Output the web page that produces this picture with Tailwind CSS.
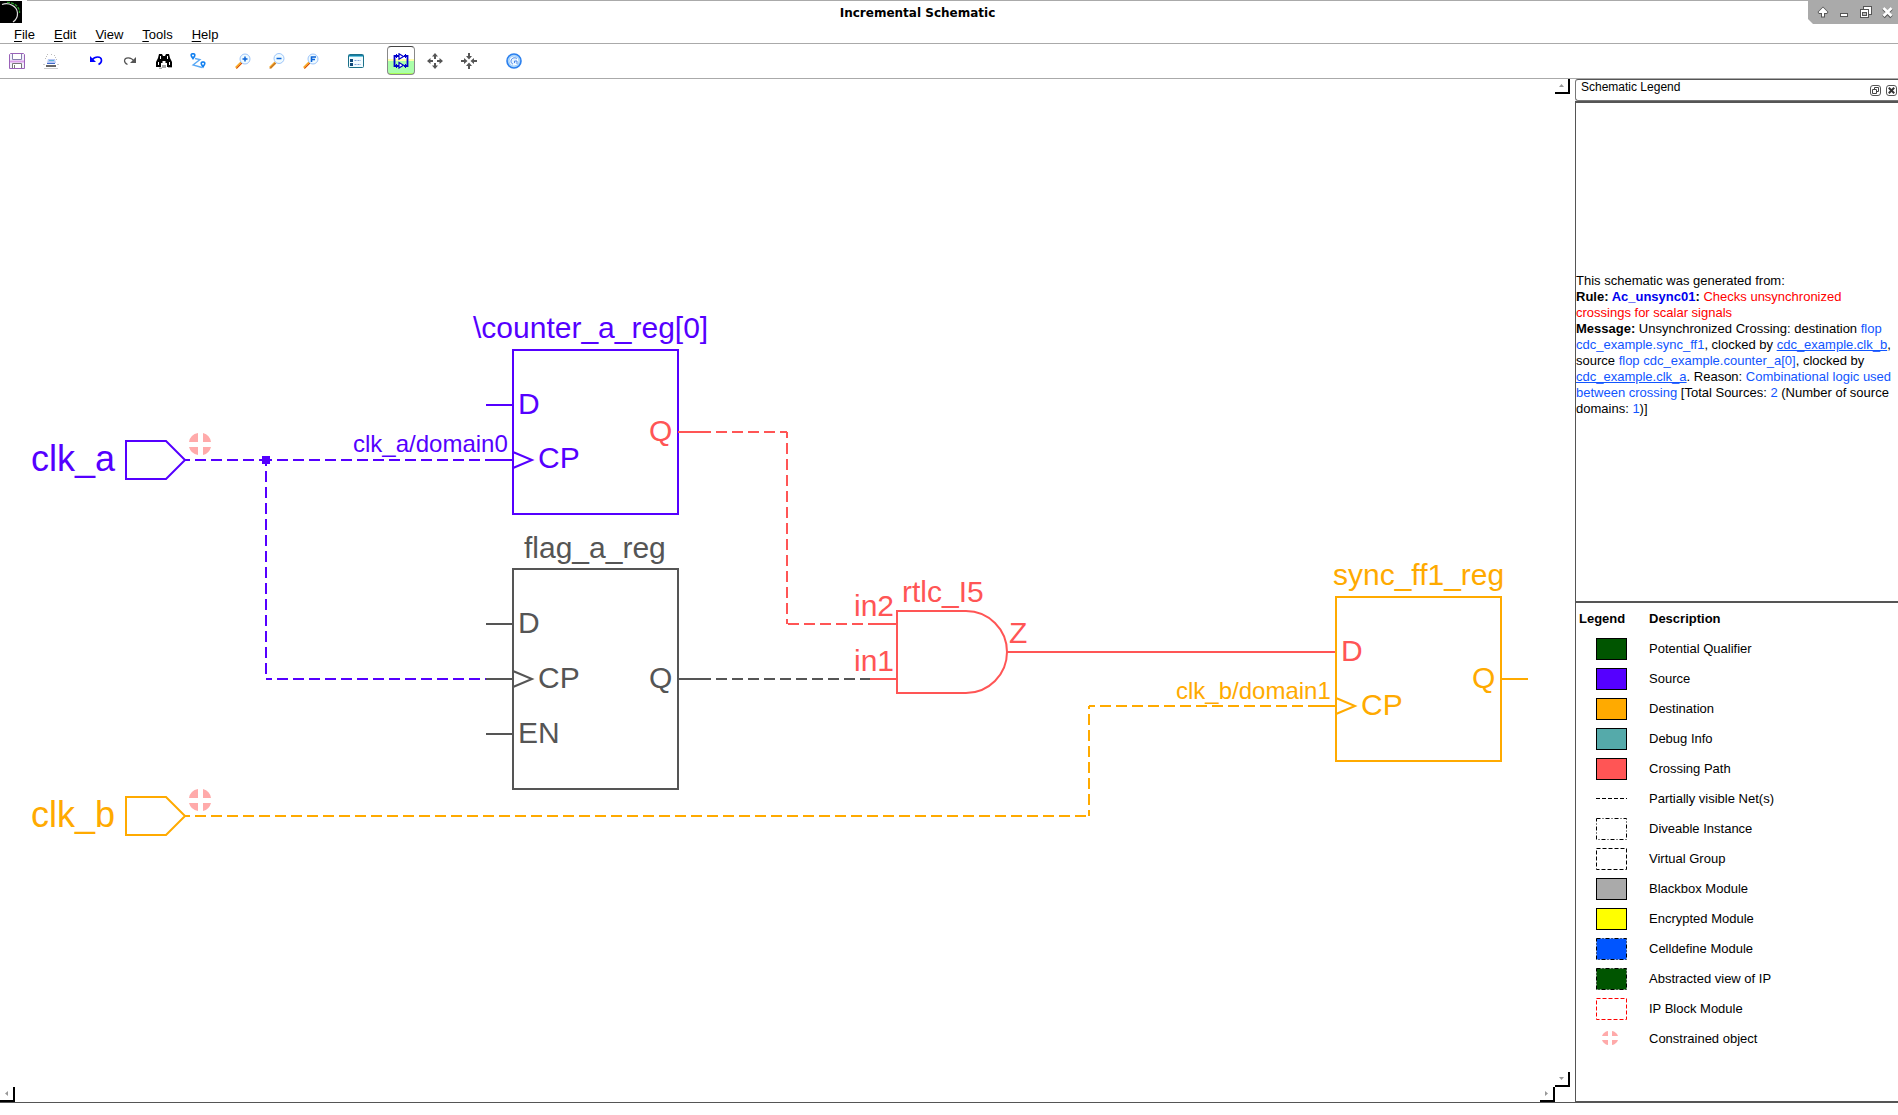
<!DOCTYPE html>
<html lang="en">
<head>
<meta charset="utf-8">
<meta name="viewport" content="width=device-width, initial-scale=1">
<title>Incremental Schematic</title>
<script src="https://cdn.jsdelivr.net/npm/@tailwindcss/browser@4"></script>
</head>
<body class="bg-white text-black font-['Liberation_Sans',Arial,sans-serif] text-[13px] leading-4">
<div class="min-h-screen flex flex-col pb-3">

  <!-- Title bar -->
  <header class="h-6 flex items-start">
    <svg class="w-[22px] h-[22px] mt-px shrink-0" viewBox="0 0 22 22" aria-hidden="true">
      <rect width="22" height="22" fill="#000"/>
      <path d="M2 3.500C9 1 17 5 17.500 12c.2 4-1.500 7-4.500 9" fill="none" stroke="#ddd" stroke-width="1.200"/>
      <path d="M7 1.500C14 1 20 6 19.500 12" fill="none" stroke="#2a9a2a" stroke-width="1.300" stroke-dasharray="3 1"/>
    </svg>
    <div class="flex-1 ml-[5px] h-6 border-t border-[#aaa] flex justify-center">
      <h1 class="font-['DejaVu_Sans',sans-serif] font-bold text-[12px] leading-6">Incremental Schematic</h1>
    </div>
    <div class="w-[90px] h-6 pl-1 bg-[#aaa] flex items-center justify-around [clip-path:polygon(0_0,100%_0,100%_100%,5px_100%,0_19px)]">
      <button type="button" aria-label="Keep above" class="size-4"><svg viewBox="0 0 16 16"><path d="M8 2.500l5.500 5.500-1.500 2h-2v3.500H6V10H4L2.500 8z" fill="#555"/><path d="M8 3.500l4.500 4.500-.8 1H9v3.500H7V9H4.300l-.8-1z" fill="#fff"/></svg></button>
      <button type="button" aria-label="Minimize" class="size-4"><svg viewBox="0 0 16 16" shape-rendering="crispEdges"><path d="M4.500 9.500h7v3h-7z" fill="#fff" stroke="#555"/></svg></button>
      <button type="button" aria-label="Restore" class="size-4"><svg viewBox="0 0 16 16" shape-rendering="crispEdges"><path d="M5.500 2.500h8v8h-8z" fill="#fff" stroke="#555"/><path d="M2.500 5.500h8v8h-8z" fill="#fff" stroke="#555"/><path d="M4.500 8.500h4v3h-4z" fill="#bbb" stroke="#555"/></svg></button>
      <button type="button" aria-label="Close" class="size-4"><svg viewBox="0 0 16 16"><path d="M4.500 4.500l8 8.500m0-8.500l-8 8.500" stroke="#555" stroke-width="3.500"/><path d="M4.500 4l8 8m0-8l-8 8" stroke="#fff" stroke-width="2.800"/></svg></button>
    </div>
  </header>

  <!-- Menu bar -->
  <nav class="h-5 border-b border-[#aaa] flex items-end gap-[19px] pl-[14px]">
    <button type="button"><span class="underline underline-offset-2">F</span>ile</button>
    <button type="button"><span class="underline underline-offset-2">E</span>dit</button>
    <button type="button"><span class="underline underline-offset-2">V</span>iew</button>
    <button type="button"><span class="underline underline-offset-2">T</span>ools</button>
    <button type="button"><span class="underline underline-offset-2">H</span>elp</button>
  </nav>

  <!-- Tool bar -->
  <div role="toolbar" aria-label="Main" class="h-[35px] border-b border-[#aaa] flex items-center gap-[11px]">
    <div class="flex">
      <button type="button" aria-label="Save" class="w-[34px] h-[30px] flex items-center justify-center">
        <svg class="size-4" viewBox="0 0 16 16"><path d="M1.500.5h13l1 1v14H.5v-14z" fill="#f3f0fb" stroke="#9a62b8"/><path d="M3.500 1v5.500h9V1" fill="#fff" stroke="#8580ad"/><path d="M1 8.500h14" stroke="#dca0ea" stroke-width="2"/><path d="M3.500 15v-4.500h9V15" fill="#fff" stroke="#777"/><path d="M5.500 12v3" stroke="#777"/></svg>
      </button>
      <button type="button" aria-label="Print" class="w-[34px] h-[30px] flex items-center justify-center">
        <svg class="size-4" viewBox="0 0 16 16"><path d="M4 1.500h1m3 0h1m2 1h1M3 3.500h1m8 1h1M2 5.500h1m10 1h1" stroke="#bbb"/><path d="M5 6h7l1 4H4z" fill="#b9c8f4"/><path d="M6 7.500h5" stroke="#58b6d6"/><path d="M4 10.500h8" stroke="#4169c8"/><path d="M0 11.500h2m12 0h2M1 15.500h14" stroke="#ccc"/><path d="M3 13h10" stroke="#333" stroke-width="1.500"/></svg>
      </button>
    </div>
    <div class="flex">
      <button type="button" aria-label="Undo" class="w-[34px] h-[30px] flex items-center justify-center">
        <svg class="size-4" viewBox="0 0 16 16"><path d="M2 3v6h6z" fill="#00f"/><path d="M4 7c3-4 9-4 9.500 0 .2 2-1 3.500-3 4.500" fill="none" stroke="#00f" stroke-width="1.600"/></svg>
      </button>
      <button type="button" aria-label="Redo" class="w-[34px] h-[30px] flex items-center justify-center">
        <svg class="size-4" viewBox="0 0 16 16"><path d="M14 4v6H8z" fill="#555"/><path d="M12 8C9 4 3 4 2.500 7.500c-.2 2 1 3 3 4" fill="none" stroke="#555" stroke-width="1.200"/></svg>
      </button>
      <button type="button" aria-label="Find" class="w-[34px] h-[30px] flex items-center justify-center">
        <svg class="size-4" viewBox="0 0 16 16"><path d="M6 12h4v3H6zM12 14h4v1h-4zM3 14.500h3V16H3z" fill="#aaa"/><path d="M3 1h3l1 2h2l1-2h3l1 4 2 4v5h-5v-4H9.500V8h-3v2H5v4H0V9l2-4z" fill="#000"/><path d="M4.500 3v3M2.500 9v3m9-9v3m2 3v3" stroke="#fff"/></svg>
      </button>
      <button type="button" aria-label="Trace path" class="w-[34px] h-[30px] flex items-center justify-center">
        <svg class="size-4" viewBox="0 0 16 16"><path d="M5 5.500l5 1L3 12l9 2.500" fill="none" stroke="#5aa9f5" stroke-width="1.300"/><path d="M3 7L.8 3.800C-.3 1 1 0 3 0s3.300 1 2.200 3.800zM13 15.500l-2.200-3.700c-1-2.500.2-3.600 2.200-3.600s3.200 1.100 2.200 3.600z" fill="#1280f0"/><circle cx="3" cy="2.500" r="1" fill="#fff"/><circle cx="13" cy="10.800" r="1" fill="#fff"/></svg>
      </button>
    </div>
    <div class="flex">
      <button type="button" aria-label="Zoom in" class="w-[34px] h-[30px] flex items-center justify-center">
        <svg class="size-4" viewBox="0 0 16 16"><path d="M1 15l5.500-5.500" stroke="#f5a623" stroke-width="2.600"/><path d="M1.500 15.500L7 10" stroke="#d8401c"/><circle cx="10" cy="6" r="5" fill="#f0fbff" stroke="#9cc4fa"/><path d="M7.500 6h5M10 3.500v5" stroke="#0a63d8" stroke-width="1.500"/></svg>
      </button>
      <button type="button" aria-label="Zoom out" class="w-[34px] h-[30px] flex items-center justify-center">
        <svg class="size-4" viewBox="0 0 16 16"><path d="M1 15l5.500-5.500" stroke="#f5a623" stroke-width="2.600"/><path d="M1 15.500L6.500 10" stroke="#a0522d"/><circle cx="10" cy="5.500" r="5" fill="#f0fbff" stroke="#9cc4fa"/><path d="M7.500 5.500h5" stroke="#0a63d8" stroke-width="1.500"/></svg>
      </button>
      <button type="button" aria-label="Zoom to fit" class="w-[34px] h-[30px] flex items-center justify-center">
        <svg class="size-4" viewBox="0 0 16 16"><path d="M1 15l5.500-5.500" stroke="#f5a623" stroke-width="2.600"/><path d="M1.500 15.500L7 10" stroke="#d8401c"/><circle cx="10" cy="6" r="5" fill="#f0fbff" stroke="#9cc4fa"/><path d="M8.500 9V4H13M8.500 6.500h3.500" fill="none" stroke="#0a63d8" stroke-width="1.600"/></svg>
      </button>
    </div>
    <button type="button" aria-label="Properties" class="w-[34px] h-[30px] flex items-center justify-center">
      <svg class="size-4" viewBox="0 0 16 16"><rect x=".5" y="1.500" width="15" height="13" rx="1" fill="#f2fbff" stroke="#1b7089"/><path d="M1 2.500h14" stroke="#1280a8"/><path d="M1 3.500h14" stroke="#6cc4dc"/><path d="M2 6h3v3H2zM2 10h3v3H2z" fill="#104878"/><path d="M6.500 7.500H13M6.500 11.500H13" stroke="#7fa0d8" stroke-dasharray="2 1"/></svg>
    </button>
    <div class="flex">
      <button type="button" aria-label="Schematic mode" aria-pressed="true" class="w-7 mx-[3px] h-[29px] flex items-center justify-center rounded-[4px] border border-[#888] border-t-[#444] bg-[linear-gradient(#fff_46%,#ffa_46%,#ffa_50%,#afa_50%,#afa_96%,#af5_96%)]">
        <svg class="size-4" viewBox="0 0 16 16"><path d="M6 3H1.500v10H6m5-10h3.500v10H11" fill="none" stroke="#00c" stroke-width="1.800"/><path d="M6 .8l4.500 2.700L6 6.200zM6 9.500l4.500 2.700L6 15z" fill="#fff" stroke="#00c" stroke-width="1.200"/><path d="M3.500 1v4m0 6v4m9-14v4m0 6v4" stroke="#00c"/></svg>
      </button>
      <button type="button" aria-label="Expand" class="w-[34px] h-[30px] flex items-center justify-center">
        <svg class="size-4" viewBox="0 0 16 16" fill="#555"><path d="M8 0l3 3.500H9V6H7V3.500H5zM8 16l3-3.500H9V10H7v2.500H5zM0 8l3.500-3v2H6v2H3.500v2zM16 8l-3.500-3v2H10v2h2.500v2z"/></svg>
      </button>
      <button type="button" aria-label="Collapse" class="w-[34px] h-[30px] flex items-center justify-center">
        <svg class="size-4" viewBox="0 0 16 16" fill="#555"><path d="M8 6.500L5 3h2V0h2v3h2zM8 9.500L5 13h2v3h2v-3h2zM6.500 8L3 5v2H0v2h3v2zM9.500 8L13 5v2h3v2h-3v2z"/></svg>
      </button>
    </div>
    <button type="button" aria-label="Refresh" class="w-[34px] h-[30px] flex items-center justify-center">
      <svg class="size-4" viewBox="0 0 16 16"><circle cx="8" cy="8" r="7" fill="#a9d4fb" stroke="#2a7fee" stroke-width="1.600"/><circle cx="8" cy="8" r="4" fill="#e4f3ff" stroke="#fff"/><path d="M11 5.500C9 4 5 4.800 5 8.300c0 1.500.8 2.500 2 2.700M11 11V8H8.500v2" fill="none" stroke="#4a86e8"/></svg>
    </button>
  </div>

  <main class="flex-1 flex">
    <!-- Schematic canvas with its scroll bars -->
    <section aria-label="Schematic" class="flex-1 min-w-0 flex flex-col border-b border-[#555] pr-[5px]">
      <div class="flex-1 flex">
        <svg class="flex-1 min-w-0 block" viewBox="0 79 1555 1008" preserveAspectRatio="xMinYMin meet" font-size="30" fill="none" stroke-width="2" font-family="Liberation Sans, Arial, sans-serif">
          <defs>
            <g id="constraint" fill="#faa" stroke="none">
              <path d="M-2-2h-9A11 11 0 0 1-2-11zM3-2h8A11 11 0 0 0 3-11zM-2 3h-9A11 11 0 0 0-2 11zM3 3h8A11 11 0 0 1 3 11z"/>
            </g>
          </defs>

          <!-- clk_a net and source register -->
          <g stroke="#50f">
            <path d="M126 441h40l19 19-19 19h-40z"/>
            <path d="M185 460h81" stroke-dasharray="11 5" stroke-dashoffset="6"/>
            <path d="M266 460h219" stroke-dasharray="11 5" stroke-dashoffset="5"/>
            <path d="M266 460v219" stroke-dasharray="11 5" stroke-dashoffset="5"/>
            <path d="M266 679h220" stroke-dasharray="11 5" stroke-dashoffset="5"/>
            <path d="M513 350h165v164h-165zM486 405h27M485 460h28M513 452l19 8-19 8"/>
          </g>
          <rect x="262" y="456" width="8" height="8" fill="#50f"/>
          <g fill="#50f">
            <text x="31" y="471" font-size="36">clk_a</text>
            <text x="353" y="452" font-size="24">clk_a/domain0</text>
            <text x="473" y="338">\counter_a_reg[0]</text>
            <text x="518" y="414">D</text>
            <text x="538" y="468">CP</text>
          </g>

          <!-- flag_a_reg -->
          <g stroke="#555">
            <path d="M513 569h165v220h-165zM486 624h27M486 679h27M486 734h27M513 671l19 8-19 8M678 679h33"/>
            <path d="M716 679h154" stroke-dasharray="11 5"/>
          </g>
          <g fill="#555">
            <text x="524" y="558">flag_a_reg</text>
            <text x="518" y="633">D</text>
            <text x="538" y="688">CP</text>
            <text x="518" y="743">EN</text>
            <text x="649" y="688">Q</text>
          </g>

          <!-- Crossing path -->
          <g stroke="#f55">
            <path d="M678 432h33M868 624h29M870 679h27M1007 652h329"/>
            <path d="M716 432h71" stroke-dasharray="11 5"/>
            <path d="M787 432v192" stroke-dasharray="11 5" stroke-dashoffset="5"/>
            <path d="M788 624h80" stroke-dasharray="11 5"/>
            <path d="M897 611h69a41 41 0 0 1 0 82h-69z"/>
          </g>
          <g fill="#f55">
            <text x="649" y="441">Q</text>
            <text x="854" y="616">in2</text>
            <text x="854" y="671">in1</text>
            <text x="902" y="602">rtlc_I5</text>
            <text x="1009" y="643">Z</text>
            <text x="1341" y="661">D</text>
          </g>

          <!-- clk_b net and destination register -->
          <g stroke="#fa0">
            <path d="M126 797h40l19 19-19 19h-40z"/>
            <path d="M185 816h904" stroke-dasharray="11 5" stroke-dashoffset="6"/>
            <path d="M1089 706v110" stroke-dasharray="11 5" stroke-dashoffset="8"/>
            <path d="M1089 706h219" stroke-dasharray="11 5" stroke-dashoffset="5"/>
            <path d="M1336 597h165v164h-165zM1308 706h28M1501 679h27M1336 698l19 8-19 8"/>
          </g>
          <g fill="#fa0">
            <text x="31" y="827" font-size="36">clk_b</text>
            <text x="1176" y="699" font-size="24">clk_b/domain1</text>
            <text x="1333" y="585">sync_ff1_reg</text>
            <text x="1361" y="715">CP</text>
            <text x="1472" y="688">Q</text>
          </g>

          <use href="#constraint" x="200" y="444"/>
          <use href="#constraint" x="200" y="800"/>
        </svg>
        <div class="w-[15px] flex flex-col justify-between">
          <button type="button" aria-label="Scroll up" class="size-[15px] border-r-2 border-b-2 border-black flex items-center justify-center"><svg class="w-[5px] h-[3px]" viewBox="0 0 5 3"><path d="M0 3h5L2.500 0z" fill="#999"/></svg></button>
          <button type="button" aria-label="Scroll down" class="size-[15px] border-r-2 border-b-2 border-black flex items-center justify-center"><svg class="w-[5px] h-[3px]" viewBox="0 0 5 3"><path d="M0 0h5L2.500 3z" fill="#999"/></svg></button>
        </div>
      </div>
      <div class="h-[15px] mr-[15px] flex justify-between">
        <button type="button" aria-label="Scroll left" class="size-[15px] border-r-2 border-b-2 border-black flex items-center justify-center"><svg class="w-[3px] h-[5px]" viewBox="0 0 3 5"><path d="M3 0v5L0 2.500z" fill="#999"/></svg></button>
        <button type="button" aria-label="Scroll right" class="size-[15px] border-r-2 border-b-2 border-black flex items-center justify-center"><svg class="w-[3px] h-[5px]" viewBox="0 0 3 5"><path d="M0 0v5l3-2.500z" fill="#999"/></svg></button>
      </div>
    </section>

    <!-- Legend dock -->
    <aside class="w-[323px] shrink-0 flex flex-col">
      <div class="h-[22px] border border-[#777] border-t-[#555] border-r-0 rounded-l-[3px] pl-[5px] flex justify-between">
        <h2 class="text-[12px] leading-[15px]">Schematic Legend</h2>
        <div class="flex items-center gap-[5px] pr-px pt-px">
          <button type="button" aria-label="Float panel" class="size-[11px]"><svg viewBox="0 0 11 11"><rect x=".5" y=".5" width="10" height="10" rx="2.500" fill="#fff" stroke="#555"/><path d="M4.500 4V2.500h4v4H7M2.500 4.500h4v4h-4z" fill="none" stroke="#444"/></svg></button>
          <button type="button" aria-label="Close panel" class="size-[11px]"><svg viewBox="0 0 11 11"><rect x=".5" y=".5" width="10" height="10" rx="2.500" fill="#fff" stroke="#555"/><path d="M2.800 2.800l5.400 5.400m0-5.400L2.800 8.200" stroke="#333" stroke-width="2"/></svg></button>
        </div>
      </div>
      <div class="flex-1 flex flex-col border-l border-y-2 border-[#555]">
        <div class="flex-1 flex flex-col justify-center pb-[14px]">
          <p>This schematic was generated from:</p>
          <p class="whitespace-nowrap"><b>Rule: <span class="text-[#00e]">Ac_unsync01</span>:</b> <span class="text-[#f00]">Checks unsynchronized<br>crossings for scalar signals</span></p>
          <p class="whitespace-nowrap"><b>Message:</b> Unsynchronized Crossing: destination <span class="text-[#15f]">flop<br>cdc_example.sync_ff1</span>, clocked by <a href="#clk_b" class="text-[#15f] underline">cdc_example.clk_b</a>,<br>source <span class="text-[#15f]">flop cdc_example.counter_a[0]</span>, clocked by<br><a href="#clk_a" class="text-[#15f] underline">cdc_example.clk_a</a>. Reason: <span class="text-[#15f]">Combinational logic used<br>between crossing</span> [Total Sources: <span class="text-[#15f]">2</span> (Number of source<br>domains: <span class="text-[#15f]">1</span>)]</p>
        </div>
        <div class="border-t-2 border-[#555] h-[500px] pt-px">
          <table class="w-full table-fixed border-collapse text-left">
            <thead>
              <tr class="h-[30px]"><th class="w-[73px] p-0 pl-[3px]">Legend</th><th class="p-0">Description</th></tr>
            </thead>
            <tbody>
              <tr class="h-[30px]"><td class="p-0 pl-5"><div class="w-[31px] h-[22px] border border-black bg-[#050]"></div></td><td class="p-0">Potential Qualifier</td></tr>
              <tr class="h-[30px]"><td class="p-0 pl-5"><div class="w-[31px] h-[22px] border border-black bg-[#50f]"></div></td><td class="p-0">Source</td></tr>
              <tr class="h-[30px]"><td class="p-0 pl-5"><div class="w-[31px] h-[22px] border border-black bg-[#fa0]"></div></td><td class="p-0">Destination</td></tr>
              <tr class="h-[30px]"><td class="p-0 pl-5"><div class="w-[31px] h-[22px] border border-black bg-[#5aa]"></div></td><td class="p-0">Debug Info</td></tr>
              <tr class="h-[30px]"><td class="p-0 pl-5"><div class="w-[31px] h-[22px] border border-black bg-[#f55]"></div></td><td class="p-0">Crossing Path</td></tr>
              <tr class="h-[30px]"><td class="p-0 pl-5"><svg class="w-[31px] h-[22px]" viewBox="0 0 31 22"><path d="M0 10.500h31" stroke="#000" stroke-dasharray="4 2"/></svg></td><td class="p-0">Partially visible Net(s)</td></tr>
              <tr class="h-[30px]"><td class="p-0 pl-5"><svg class="w-[31px] h-[22px]" viewBox="0 0 31 22"><path d="M.5.5h30v21H.5z" fill="none" stroke="#000" stroke-dasharray="4 2 1 2"/></svg></td><td class="p-0">Diveable Instance</td></tr>
              <tr class="h-[30px]"><td class="p-0 pl-5"><svg class="w-[31px] h-[22px]" viewBox="0 0 31 22"><path d="M.5.5h30v21H.5z" fill="none" stroke="#000" stroke-dasharray="4 2"/></svg></td><td class="p-0">Virtual Group</td></tr>
              <tr class="h-[30px]"><td class="p-0 pl-5"><div class="w-[31px] h-[22px] border border-black bg-[#aaa]"></div></td><td class="p-0">Blackbox Module</td></tr>
              <tr class="h-[30px]"><td class="p-0 pl-5"><div class="w-[31px] h-[22px] border border-black bg-[#ff0]"></div></td><td class="p-0">Encrypted Module</td></tr>
              <tr class="h-[30px]"><td class="p-0 pl-5"><svg class="w-[31px] h-[22px]" viewBox="0 0 31 22"><path d="M.5.5h30v21H.5z" fill="#05f" stroke="#000" stroke-dasharray="4 2 1 2"/></svg></td><td class="p-0">Celldefine Module</td></tr>
              <tr class="h-[30px]"><td class="p-0 pl-5"><svg class="w-[31px] h-[22px]" viewBox="0 0 31 22"><path d="M.5.5h30v21H.5z" fill="#050" stroke="#000" stroke-dasharray="4 2 1 2"/></svg></td><td class="p-0">Abstracted view of IP</td></tr>
              <tr class="h-[30px]"><td class="p-0 pl-5"><svg class="w-[31px] h-[22px]" viewBox="0 0 31 22"><path d="M.5.5h30v21H.5z" fill="none" stroke="#f00" stroke-dasharray="4 2"/></svg></td><td class="p-0">IP Block Module</td></tr>
              <tr class="h-[30px]"><td class="p-0 pl-5"><svg class="w-[31px] h-[22px]" viewBox="0 0 31 22"><path d="M12 8H6a8 8 0 0 1 6-5zM16 8h6a8 8 0 0 0-6-5zM12 12H6a8 8 0 0 0 6 5zM16 12h6a8 8 0 0 1-6 5z" fill="#faa"/></svg></td><td class="p-0">Constrained object</td></tr>
            </tbody>
          </table>
        </div>
      </div>
    </aside>
  </main>
</div>
</body>
</html>
